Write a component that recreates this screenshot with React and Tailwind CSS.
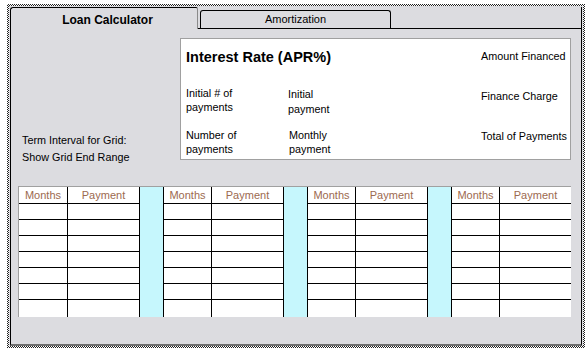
import React from "react";

const headerColor = "text-[#9c6a4f]";

function DataCol({ label, w, last }) {
  const rows = [0, 1, 2, 3, 4, 5];
  return (
    <div className={`flex flex-col ${w} ${last ? "" : "border-r border-black"}`}>
      <div className={`h-[17px] border-b border-black flex items-center justify-center text-[11px] leading-[14px] ${headerColor}`}>
        {label}
      </div>
      {rows.map((r) => (
        <div key={r} className="h-[16px] border-b border-black" />
      ))}
      <div className="h-[17px]" />
    </div>
  );
}

function CyanCol() {
  return <div className="w-[24px] h-[130px] bg-[#c6f7fd] border-r border-black" />;
}

export default function App() {
  return (
    <div className="w-[588px] h-[352px] bg-white pt-[4px] pl-[7px] font-['Liberation_Sans',Arial,sans-serif] text-black">
      <div className="w-[578px] h-[344px] p-[2px] bg-[repeating-conic-gradient(#222_0%_25%,#fff_0%_50%)] bg-[length:2px_2px]">
        <div className="w-full h-full bg-[#dcdce0] flex flex-col pl-[1px] pr-[1px] pt-[1px]">
          {/* Tab strip */}
          <div className="flex h-[22px]">
            <div className="w-[188px] h-[22px] border-l border-t border-black border-r border-r-[#8a8a8a] rounded-tl-[3px] rounded-tr-[2px] flex items-center justify-center text-[12px] font-bold leading-[14px] pt-[3px] pl-[7px]">
              Loan Calculator
            </div>
            <div className="flex-1 h-[22px] border-b border-black border-r flex items-end pl-[2px]">
              <div className="w-[191px] h-[18px] border-l border-t border-r border-black rounded-t-[3px] flex items-center justify-center text-[11px] leading-[14px] pb-[1px]">
                Amortization
              </div>
            </div>
          </div>

          {/* Panel body */}
          <div className="flex-1 border-l border-r border-black border-b-2 border-b-[#6f6f6f] flex flex-col">
            <div className="flex items-start">
              <div className="w-[169px] pl-[11px] pt-[103px] text-[10.8px] leading-[17px]">
                <div>Term Interval for Grid:</div>
                <div>Show Grid End Range</div>
              </div>
              <div className="mt-[9px] w-[391px] h-[122px] border border-[#a0a0a0] bg-white flex">
                <div className="w-[300px] pl-[5px] pt-[10px] flex flex-col">
                  <div className="text-[14.5px] font-bold leading-[16px]">Interest Rate (APR%)</div>
                  <div className="flex mt-[21px] text-[10.8px] leading-[14px]">
                    <div className="w-[102px]">
                      <div>Initial # of</div>
                      <div>payments</div>
                    </div>
                    <div className="pt-[1px] leading-[15px]">
                      <div>Initial</div>
                      <div>payment</div>
                    </div>
                  </div>
                  <div className="flex mt-[11px] text-[10.8px] leading-[14px]">
                    <div className="w-[103px]">
                      <div>Number of</div>
                      <div>payments</div>
                    </div>
                    <div>
                      <div>Monthly</div>
                      <div>payment</div>
                    </div>
                  </div>
                </div>
                <div className="pt-[10px] flex flex-col gap-[26px] text-[10.8px] leading-[14px]">
                  <div>Amount Financed</div>
                  <div>Finance Charge</div>
                  <div>Total of Payments</div>
                </div>
              </div>
            </div>

            {/* Grid */}
            <div className="mt-[20px] ml-[7px] w-[553px] border-l border-t border-[#a0a0a0] bg-white flex">
              <DataCol label="Months" w="w-[49px]" />
              <DataCol label="Payment" w="w-[72px]" />
              <CyanCol />
              <DataCol label="Months" w="w-[48px]" />
              <DataCol label="Payment" w="w-[72px]" />
              <CyanCol />
              <DataCol label="Months" w="w-[48px]" />
              <DataCol label="Payment" w="w-[72px]" />
              <CyanCol />
              <DataCol label="Months" w="w-[48px]" />
              <DataCol label="Payment" w="w-[71px]" last />
            </div>
          </div>
        </div>
      </div>
    </div>
  );
}
